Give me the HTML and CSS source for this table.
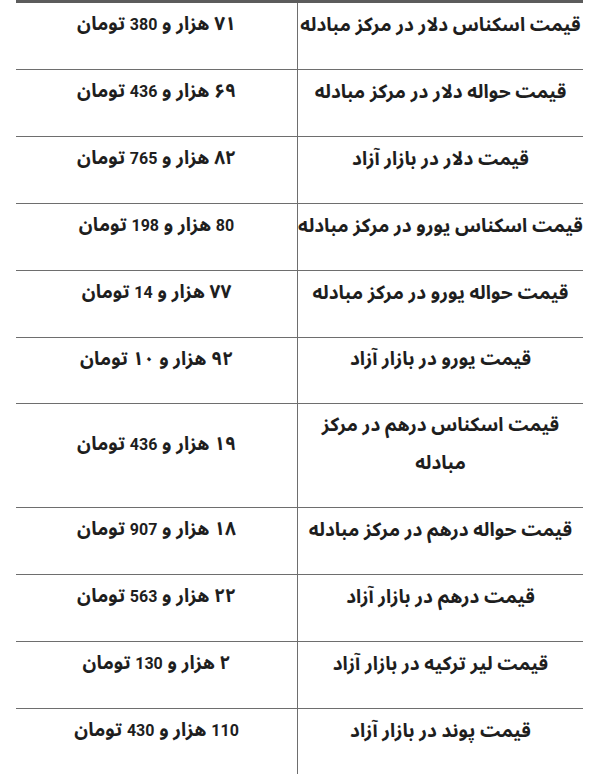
FILE: index.html
```html
<!DOCTYPE html>
<html lang="fa" dir="rtl">
<head>
<meta charset="utf-8">
<link rel="stylesheet" href="styles.css">
</head>
<body>
<div class="page">
<table class="rates">
<tbody>
<tr><td class="label">قیمت اسکناس دلار در مرکز مبادله</td><td class="value">۷۱ هزار و <span class="num">380</span> تومان</td></tr>
<tr><td class="label">قیمت حواله دلار در مرکز مبادله</td><td class="value">۶۹ هزار و <span class="num">436</span> تومان</td></tr>
<tr><td class="label">قیمت دلار در بازار آزاد</td><td class="value">۸۲ هزار و <span class="num">765</span> تومان</td></tr>
<tr><td class="label">قیمت اسکناس یورو در مرکز مبادله</td><td class="value"><span class="num">80</span> هزار و <span class="num">198</span> تومان</td></tr>
<tr><td class="label">قیمت حواله یورو در مرکز مبادله</td><td class="value">۷۷ هزار و <span class="num">14</span> تومان</td></tr>
<tr><td class="label">قیمت یورو در بازار آزاد</td><td class="value">۹۲ هزار و ۱۰ تومان</td></tr>
<tr><td class="label">قیمت اسکناس درهم در مرکز<br>مبادله</td><td class="value">۱۹ هزار و <span class="num">436</span> تومان</td></tr>
<tr><td class="label">قیمت حواله درهم در مرکز مبادله</td><td class="value">۱۸ هزار و <span class="num">907</span> تومان</td></tr>
<tr><td class="label">قیمت درهم در بازار آزاد</td><td class="value">۲۲ هزار و <span class="num">563</span> تومان</td></tr>
<tr><td class="label">قیمت لیر ترکیه در بازار آزاد</td><td class="value">۲ هزار و <span class="num">130</span> تومان</td></tr>
<tr><td class="label">قیمت پوند در بازار آزاد</td><td class="value"><span class="num">110</span> هزار و <span class="num">430</span> تومان</td></tr>
</tbody>
</table>
</div>
</body>
</html>
```
FILE: styles.css
```css
html, body {
  margin: 0;
  padding: 0;
  background: #ffffff;
}
.page {
  padding: 0 14px 0 16px;
}
.rates {
  width: 567px;
  border-collapse: collapse;
  border-top: 3px solid #5c5c5c;
  font-family: Roboto, "Noto Sans Arabic", "DejaVu Sans", sans-serif;
  font-weight: 700;
  font-size: 19px;
  line-height: 38px;
  color: #1e1e1e;
}
.rates tr + tr td {
  border-top: 1px solid #6e6e6e;
}
.rates td {
  padding: 2px 0 25px;
  text-align: center;
  vertical-align: middle;
  white-space: nowrap;
}
.label {
  width: 285px;
  border-left: 1px solid #6e6e6e;
}
.value {
  width: 281px;
}
.num {
  font-size: 16px;
}
```
